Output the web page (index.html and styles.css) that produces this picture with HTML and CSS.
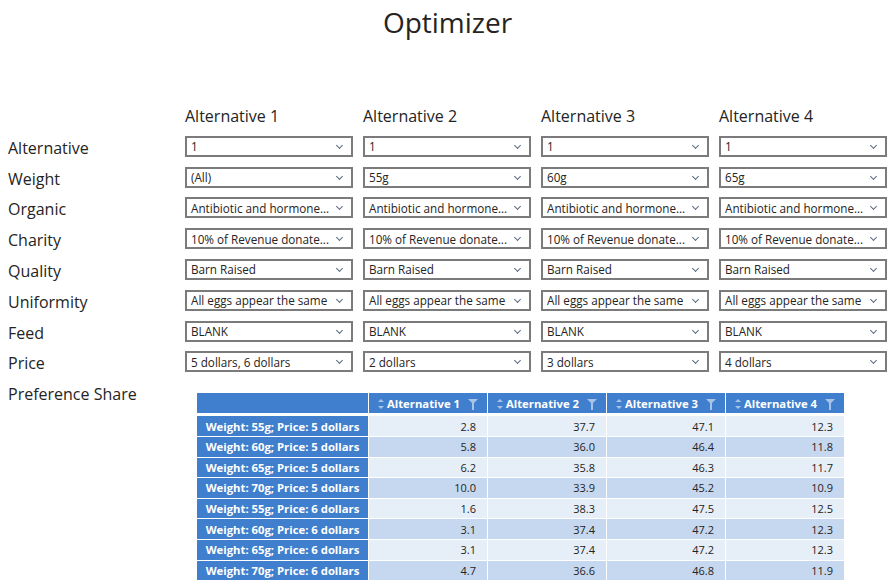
FILE: index.html
```html
<!DOCTYPE html>
<html lang="en">
<head>
  <meta charset="UTF-8">
  <title>Optimizer</title>
  <link rel="stylesheet" href="styles.css">
</head>
<body>
  <h1 class="title">Optimizer</h1>

  <section class="slicers">
    <div></div>
    <div class="col-head">Alternative 1</div>
    <div class="col-head">Alternative 2</div>
    <div class="col-head">Alternative 3</div>
    <div class="col-head">Alternative 4</div>

    <div class="label">Alternative</div>
    <div class="drop">1</div>
    <div class="drop">1</div>
    <div class="drop">1</div>
    <div class="drop">1</div>

    <div class="label">Weight</div>
    <div class="drop">(All)</div>
    <div class="drop">55g</div>
    <div class="drop">60g</div>
    <div class="drop">65g</div>

    <div class="label">Organic</div>
    <div class="drop">Antibiotic and hormone...</div>
    <div class="drop">Antibiotic and hormone...</div>
    <div class="drop">Antibiotic and hormone...</div>
    <div class="drop">Antibiotic and hormone...</div>

    <div class="label">Charity</div>
    <div class="drop">10% of Revenue donate...</div>
    <div class="drop">10% of Revenue donate...</div>
    <div class="drop">10% of Revenue donate...</div>
    <div class="drop">10% of Revenue donate...</div>

    <div class="label">Quality</div>
    <div class="drop">Barn Raised</div>
    <div class="drop">Barn Raised</div>
    <div class="drop">Barn Raised</div>
    <div class="drop">Barn Raised</div>

    <div class="label">Uniformity</div>
    <div class="drop">All eggs appear the same</div>
    <div class="drop">All eggs appear the same</div>
    <div class="drop">All eggs appear the same</div>
    <div class="drop">All eggs appear the same</div>

    <div class="label">Feed</div>
    <div class="drop">BLANK</div>
    <div class="drop">BLANK</div>
    <div class="drop">BLANK</div>
    <div class="drop">BLANK</div>

    <div class="label">Price</div>
    <div class="drop">5 dollars, 6 dollars</div>
    <div class="drop">2 dollars</div>
    <div class="drop">3 dollars</div>
    <div class="drop">4 dollars</div>
  </section>

  <section class="share">
    <div class="share-label">Preference Share</div>
    <table class="matrix">
      <thead>
        <tr>
          <th class="corner"></th>
          <th><span class="sort"></span>Alternative 1<span class="funnel"></span></th>
          <th><span class="sort"></span>Alternative 2<span class="funnel"></span></th>
          <th><span class="sort"></span>Alternative 3<span class="funnel"></span></th>
          <th><span class="sort"></span>Alternative 4<span class="funnel"></span></th>
        </tr>
      </thead>
      <tbody>
        <tr><th>Weight: 55g; Price: 5 dollars</th><td>2.8</td><td>37.7</td><td>47.1</td><td>12.3</td></tr>
        <tr><th>Weight: 60g; Price: 5 dollars</th><td>5.8</td><td>36.0</td><td>46.4</td><td>11.8</td></tr>
        <tr><th>Weight: 65g; Price: 5 dollars</th><td>6.2</td><td>35.8</td><td>46.3</td><td>11.7</td></tr>
        <tr><th>Weight: 70g; Price: 5 dollars</th><td>10.0</td><td>33.9</td><td>45.2</td><td>10.9</td></tr>
        <tr><th>Weight: 55g; Price: 6 dollars</th><td>1.6</td><td>38.3</td><td>47.5</td><td>12.5</td></tr>
        <tr><th>Weight: 60g; Price: 6 dollars</th><td>3.1</td><td>37.4</td><td>47.2</td><td>12.3</td></tr>
        <tr><th>Weight: 65g; Price: 6 dollars</th><td>3.1</td><td>37.4</td><td>47.2</td><td>12.3</td></tr>
        <tr><th>Weight: 70g; Price: 6 dollars</th><td>4.7</td><td>36.6</td><td>46.8</td><td>11.9</td></tr>
      </tbody>
    </table>
  </section>
</body>
</html>
```

FILE: styles.css
```css
* {
  box-sizing: border-box;
}

body {
  margin: 0;
  padding: 0 5px 0 8px;
  font-family: 'Open Sans', sans-serif;
  color: #252423;
  background: #fff;
}

.title {
  margin: 0;
  padding-top: 3px;
  height: 105px;
  font-size: 28px;
  font-weight: 400;
  line-height: 38px;
  text-align: center;
}

.slicers {
  display: grid;
  grid-template-columns: 167px repeat(4, 168px);
  grid-auto-rows: 21px;
  column-gap: 10px;
  row-gap: 9.8px;
}

.col-head {
  font-size: 16px;
  line-height: 22px;
}

.label {
  font-size: 16px;
  line-height: 21px;
  padding-top: 2px;
  white-space: nowrap;
}

.drop {
  display: flex;
  align-items: center;
  height: 21px;
  padding: 0 20px 0 4px;
  border: 2px solid #7b7b7b;
  font-size: 11.7px;
  white-space: nowrap;
  overflow: hidden;
  position: relative;
}

.drop::after {
  content: '';
  position: absolute;
  right: 9px;
  top: 5px;
  width: 4px;
  height: 4px;
  border-right: 1px solid #5b6b80;
  border-bottom: 1px solid #5b6b80;
  transform: rotate(45deg);
}

.share {
  display: flex;
  margin-top: 9px;
}

.share-label {
  width: 189px;
  flex-shrink: 0;
  padding-top: 2px;
  font-size: 16px;
  line-height: 22px;
}

.matrix {
  margin-top: 11px;
  border-collapse: separate;
  border-spacing: 1px 1px;
  margin-left: -1px;
  font-size: 11px;
}

.matrix th,
.matrix td {
  height: 19.6px;
  padding: 0;
}

.matrix thead th {
  height: 22px;
  width: 118px;
  background: #3f7fcd;
  color: #fff;
  font-size: 11.3px;
  font-weight: 700;
  white-space: nowrap;
  text-align: center;
  border-bottom: 2px solid #fff;
}

.matrix thead th.corner {
  width: 171px;
}

.matrix tbody th {
  background: #3f7fcd;
  color: #fff;
  font-size: 11.3px;
  font-weight: 700;
  text-align: center;
  white-space: nowrap;
}

.matrix td {
  text-align: right;
  padding-right: 11px;
}

.matrix tbody tr:nth-child(odd) td {
  background: #e6eef8;
}

.matrix tbody tr:nth-child(even) td {
  background: #c6d8ef;
}

.sort {
  display: inline-block;
  position: relative;
  width: 6px;
  height: 10px;
  margin-right: 3px;
  vertical-align: -1px;
}

.sort::before,
.sort::after {
  content: '';
  position: absolute;
  left: 0;
  border-left: 3px solid transparent;
  border-right: 3px solid transparent;
}

.sort::before {
  top: 0;
  border-bottom: 3.5px solid #a7c3e8;
}

.sort::after {
  bottom: 0;
  border-top: 3.5px solid #a7c3e8;
}

.funnel {
  display: inline-block;
  position: relative;
  width: 10px;
  height: 11px;
  margin-left: 8px;
  vertical-align: -2px;
}

.funnel::before {
  content: '';
  position: absolute;
  top: 0;
  left: 0;
  border-left: 5px solid transparent;
  border-right: 5px solid transparent;
  border-top: 5px solid #a7c3e8;
}

.funnel::after {
  content: '';
  position: absolute;
  top: 4px;
  left: 4px;
  width: 2px;
  height: 7px;
  background: #a7c3e8;
}
```
